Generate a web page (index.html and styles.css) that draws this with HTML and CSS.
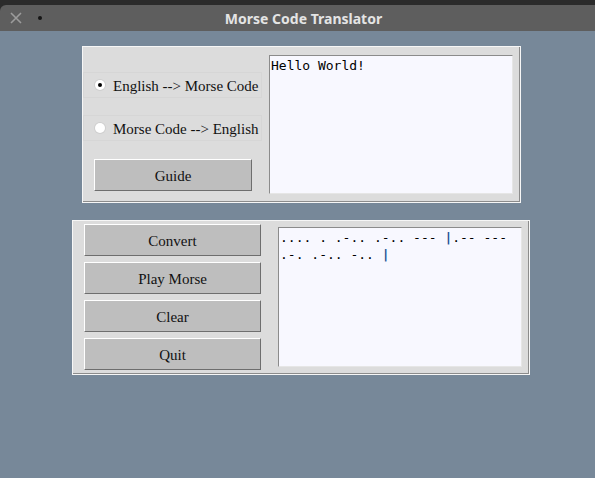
FILE: index.html
```html
<!DOCTYPE html>
<html lang="en">
<head>
<meta charset="utf-8">
<title>Morse Code Translator</title>
<link rel="stylesheet" href="styles.css">
</head>
<body>
<header class="window-top">
  <div class="titlebar">
    <svg class="close-icon" width="12" height="12" viewBox="0 0 12 12" aria-hidden="true">
      <path d="M1 1 L11 11 M11 1 L1 11" stroke="#9c9c9c" stroke-width="1.6" fill="none"/>
    </svg>
    <span class="menu-dot"></span>
    <span class="title">Morse Code Translator</span>
  </div>
</header>
<main class="content">
  <section class="frame frame-top">
    <div class="options">
      <label class="radio-row"><span class="radio checked"></span><span class="radio-label">English --&gt; Morse Code</span></label>
      <label class="radio-row"><span class="radio"></span><span class="radio-label">Morse Code --&gt; English</span></label>
      <button class="btn guide-btn">Guide</button>
    </div>
    <div class="textbox input-box">Hello World!</div>
  </section>
  <section class="frame frame-bottom">
    <div class="actions">
      <button class="btn">Convert</button>
      <button class="btn">Play Morse</button>
      <button class="btn">Clear</button>
      <button class="btn">Quit</button>
    </div>
    <div class="textbox output-box">.... . .-.. .-.. --- <span class="sep">|</span>.-- --- <br>.-. .-.. -.. <span class="sep">|</span></div>
  </section>
</main>
</body>
</html>
```
FILE: styles.css
```css
* { box-sizing: border-box; }

html, body {
  margin: 0;
  padding: 0;
}

body {
  background: #778899;
  width: 595px;
  height: 478px;
  overflow: hidden;
  font-family: "Liberation Serif", serif;
}

.window-top {
  background: #2b2b2b;
  padding-top: 5px;
}

.titlebar {
  height: 26px;
  background: #5e5e5e;
  border-radius: 6px 0 0 0;
  display: flex;
  align-items: center;
  padding-left: 10px;
}

.close-icon {
  display: block;
  flex: none;
}

.menu-dot {
  width: 4px;
  height: 4px;
  border-radius: 50%;
  background: #151515;
  margin-left: 16px;
  flex: none;
}

.title {
  flex: 1;
  text-align: center;
  margin-right: 30px;
  font-family: "Noto Sans", "DejaVu Sans", sans-serif;
  font-weight: bold;
  font-size: 14px;
  color: #e4e4e4;
}

.content {
  padding-top: 15px;
}

.frame {
  background: #dcdcdc;
  border: 1px solid #f6f6f6;
  box-shadow: inset -1px -1px 0 #8c8c8c;
  display: flex;
  align-items: flex-start;
}

.frame-top {
  margin-left: 82px;
  width: 439px;
  height: 157px;
}

.frame-bottom {
  margin-left: 72px;
  margin-top: 17px;
  width: 458px;
  height: 155px;
}

.options {
  width: 179px;
  display: flex;
  flex-direction: column;
  padding-top: 25px;
}

.radio-row {
  height: 26px;
  display: flex;
  align-items: center;
  border: 1px solid #d6d6d6;
  padding-left: 11px;
  font-size: 15px;
  color: #111;
}

.radio-row + .radio-row {
  margin-top: 17px;
}

.radio {
  width: 10px;
  height: 10px;
  border-radius: 50%;
  background: #fff;
  box-shadow: 0 0 0 1px #cfcfcf;
  display: flex;
  align-items: center;
  justify-content: center;
  flex: none;
}

.radio.checked::after {
  content: "";
  width: 4px;
  height: 4px;
  border-radius: 50%;
  background: #000;
}

.radio-label {
  margin-left: 8px;
  padding-top: 2px;
  white-space: nowrap;
}

.btn {
  height: 32px;
  background: #bebebe;
  border-style: solid;
  border-width: 1px;
  border-color: #ffffff #6e6e6e #6e6e6e #ffffff;
  font-family: "Liberation Serif", serif;
  font-size: 15px;
  color: #111;
  padding: 2px 0 0 0;
  margin: 0;
}

.guide-btn {
  margin-top: 18px;
  margin-left: 11px;
  width: 158px;
}

.actions {
  margin-left: 11px;
  margin-top: 3px;
  width: 177px;
  display: flex;
  flex-direction: column;
  gap: 6px;
}

.textbox {
  width: 244px;
  background: #f8f8ff;
  border-style: solid;
  border-width: 1px;
  border-color: #8b8b8b #e6e6e6 #e6e6e6 #8b8b8b;
  font-family: "DejaVu Sans Mono", monospace;
  font-size: 13px;
  line-height: 17px;
  color: #000;
  padding: 1px 1px;
  white-space: pre;
}

.input-box {
  margin-left: 7px;
  margin-top: 8px;
  height: 139px;
}

.output-box {
  margin-left: 17px;
  margin-top: 6px;
  height: 140px;
}

.sep {
  color: #1f5296;
  font-weight: bold;
}
```
